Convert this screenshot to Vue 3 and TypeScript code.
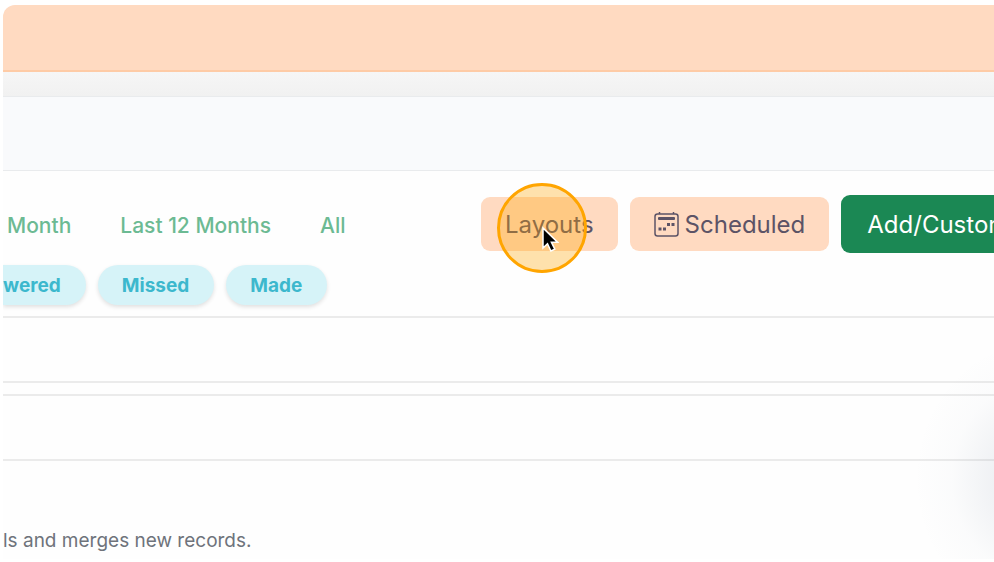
<script setup lang="ts">
const ranges: string[] = ['Month', 'Last 12 Months', 'All']
const callFilters: string[] = ['wered', 'Missed', 'Made']
</script>

<template>
  <div class="page">
    <main class="frame">
      <header class="banner"></header>
      <div class="strip"></div>
      <div class="subheader"></div>

      <section class="toolbar">
        <div class="filters">
          <nav class="ranges" aria-label="Date range">
            <a v-for="range in ranges" :key="range" href="#" class="range">{{ range }}</a>
          </nav>
          <div class="chips">
            <button v-for="filter in callFilters" :key="filter" type="button" class="chip">{{ filter }}</button>
          </div>
        </div>
        <div class="actions">
          <button type="button" class="action">
            Layouts
            <span class="spotlight" aria-hidden="true">
              <svg class="pointer" viewBox="0 0 18 27" width="18" height="27">
                <path d="M2 2v20l4.500-4.200 3.400 7.200 3.900-1.800-3.400-7h6.100z" fill="#000" stroke="#fff" stroke-width="1.500" />
              </svg>
            </span>
          </button>
          <button type="button" class="action">
            <svg class="calendar" viewBox="0 0 25 25" width="25" height="25" aria-hidden="true">
              <rect x="1" y="2" width="23" height="22" rx="2.500" fill="none" stroke="currentColor" stroke-width="1.500" />
              <path d="M5.500 0v2M19.500 0v2" stroke="currentColor" stroke-width="1.500" />
              <rect x="4" y="5" width="17" height="3" rx="1" fill="currentColor" />
              <path d="M13 11h3v3h-3zM17.500 11h3v3h-3zM4.500 15.500h3v3h-3zM9 15.500h3v3h-3z" fill="currentColor" />
            </svg>
            Scheduled
          </button>
          <button type="button" class="action primary">Add/Custom</button>
        </div>
      </section>

      <div class="row"></div>
      <div class="gap"></div>
      <div class="row"></div>

      <section class="note">
        <p>ls and merges new records.</p>
      </section>
      <div class="glow" aria-hidden="true"></div>
    </main>
  </div>
</template>

<style>
body {
  background: #fff;
}
</style>

<style scoped>
.page {
  padding: 5px 0 3px 3px;
  font-family: Inter, 'Liberation Sans', sans-serif;
}

.frame {
  position: relative;
  overflow: hidden;
  border-radius: 12px 0 0 0;
  background: #fefefe;
}

.banner {
  height: 65px;
  background: #ffdac1;
  border-bottom: 2px solid #fecba6;
}

.strip {
  height: 24px;
  background: linear-gradient(#f6f6f6, #f1f1f1);
}

.subheader {
  height: 73px;
  background: #f9fafc;
  border-top: 1px solid #e9ebed;
  border-bottom: 1px solid #e9ebed;
}

.toolbar {
  display: flex;
  align-items: flex-start;
  padding: 24px 0 11px;
  border-bottom: 2px solid #ebebeb;
}

.filters {
  flex: none;
  width: 478px;
  padding-top: 17px;
}

.ranges {
  display: flex;
  gap: 49px;
  padding-left: 4px;
}

.range {
  color: #6cba93;
  font-size: 21px;
  font-weight: 500;
  line-height: 28px;
  text-decoration: none;
  white-space: nowrap;
}

.chips {
  display: flex;
  gap: 12px;
  margin-top: 25px;
}

button {
  border: 0;
  margin: 0;
  font-family: inherit;
  white-space: nowrap;
  cursor: pointer;
}

.chip {
  height: 40px;
  padding: 0 25px 0 24px;
  border-radius: 20px;
  background: #d6f3f8;
  box-shadow: 0 2px 4px rgba(0, 0, 0, 0.12);
  color: #3cb8cd;
  font-size: 19px;
  font-weight: 700;
}

.chip:first-child {
  padding-left: 0;
  border-radius: 0 20px 20px 0;
}

.actions {
  display: flex;
  flex: 1;
  align-items: center;
  gap: 12px;
  min-width: 0;
}

.action {
  position: relative;
  display: flex;
  flex: none;
  align-items: center;
  gap: 6px;
  height: 54px;
  padding: 0 24px;
  border-radius: 9px;
  background: #ffdac1;
  color: #5c5366;
  font-size: 24px;
}

.primary {
  flex: 1;
  min-width: 0;
  height: 58px;
  padding: 0 0 0 26px;
  border-radius: 9px 0 0 9px;
  overflow: hidden;
  background: #1b8854;
  color: #fff;
}

.spotlight {
  position: absolute;
  top: -14px;
  left: 16px;
  box-sizing: border-box;
  width: 90px;
  height: 90px;
  border: 3px solid #ffa500;
  border-radius: 50%;
  background: rgba(255, 165, 0, 0.32);
}

.pointer {
  position: absolute;
  top: 40px;
  left: 41px;
}

.row {
  height: 63px;
  border-bottom: 2px solid #ebebeb;
}

.gap {
  height: 11px;
  border-bottom: 2px solid #ebebeb;
}

.note {
  padding: 66px 0 4px;
}

.note p {
  margin: 0;
  color: #6e737b;
  font-size: 19px;
  line-height: 28px;
}

.glow {
  position: absolute;
  right: -170px;
  bottom: -60px;
  width: 250px;
  height: 280px;
  border-radius: 50%;
  background: radial-gradient(closest-side, rgba(90, 110, 140, 0.14), rgba(90, 110, 140, 0.09) 35%, rgba(90, 110, 140, 0.02) 70%, transparent);
  pointer-events: none;
}
</style>
